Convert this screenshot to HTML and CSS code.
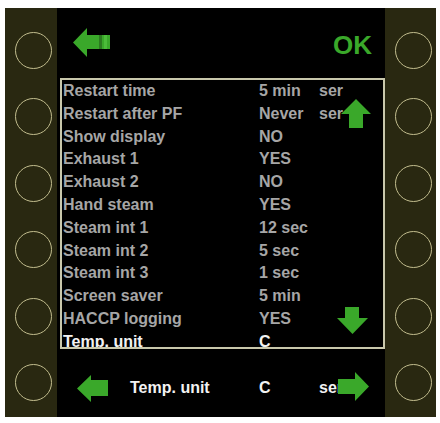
FILE: index.html
```html
<!DOCTYPE html>
<html>
<head>
<meta charset="utf-8">
<link rel="stylesheet" href="styles.css">
</head>
<body>
<div class="device">
  <div class="side side-left">
    <span class="knob"></span><span class="knob"></span><span class="knob"></span>
    <span class="knob"></span><span class="knob"></span><span class="knob"></span>
  </div>
  <div class="screen">
    <div class="header">
      <svg class="icon-exit" width="38" height="29" viewBox="0 0 38 29">
        <polygon points="1,14.5 15,0 15,7 27,7 27,21 15,21 15,29" fill="#3aa82a"/>
        <rect x="27" y="7" width="3" height="14" fill="#2c7a20"/>
        <rect x="30" y="7" width="8" height="14" fill="#3aa82a"/>
        <rect x="32" y="7" width="3" height="14" fill="#4cbc3a"/>
      </svg>
      <span class="ok">OK</span>
    </div>
    <div class="list">
      <div class="row"><span class="lbl">Restart time</span><span class="val">5 min</span><span class="ext">ser</span></div>
      <div class="row"><span class="lbl">Restart after PF</span><span class="val">Never</span><span class="ext">ser</span></div>
      <div class="row"><span class="lbl">Show display</span><span class="val">NO</span></div>
      <div class="row"><span class="lbl">Exhaust 1</span><span class="val">YES</span></div>
      <div class="row"><span class="lbl">Exhaust 2</span><span class="val">NO</span></div>
      <div class="row"><span class="lbl">Hand steam</span><span class="val">YES</span></div>
      <div class="row"><span class="lbl">Steam int 1</span><span class="val">12 sec</span></div>
      <div class="row"><span class="lbl">Steam int 2</span><span class="val">5 sec</span></div>
      <div class="row"><span class="lbl">Steam int 3</span><span class="val">1 sec</span></div>
      <div class="row"><span class="lbl">Screen saver</span><span class="val">5 min</span></div>
      <div class="row"><span class="lbl">HACCP logging</span><span class="val">YES</span></div>
      <div class="row row-active"><span class="lbl">Temp. unit</span><span class="val">C</span></div>
      <svg class="arrow-up" width="30" height="29" viewBox="0 0 30 29">
        <polygon points="15,0 30,15 22,15 22,29 8,29 8,15 0,15" fill="#3aa82a"/>
      </svg>
      <svg class="arrow-down" width="31" height="27" viewBox="0 0 31 27">
        <polygon points="8,0 22,0 22,11 31,11 15.5,27 0,11 8,11" fill="#3aa82a"/>
      </svg>
    </div>
    <div class="footer">
      <svg class="arrow-left" width="31" height="27" viewBox="0 0 31 27">
        <polygon points="0,13.5 14,0 14,5 31,5 31,21 14,21 14,27" fill="#3aa82a"/>
      </svg>
      <span class="f-lbl">Temp. unit</span>
      <span class="f-val">C</span>
      <span class="f-ext">ser</span>
      <svg class="arrow-right" width="31" height="29" viewBox="0 0 31 29">
        <polygon points="0,7 17,7 17,0 31,14.5 17,29 17,22 0,22" fill="#3aa82a"/>
      </svg>
    </div>
  </div>
  <div class="side side-right">
    <span class="knob"></span><span class="knob"></span><span class="knob"></span>
    <span class="knob"></span><span class="knob"></span><span class="knob"></span>
  </div>
</div>
</body>
</html>
```

FILE: styles.css
```css
* { box-sizing: border-box; }
html, body { margin: 0; padding: 0; background: #ffffff; }
body {
  width: 440px;
  height: 423px;
  padding: 8px 4px 6px 5px;
  font-family: "Liberation Sans", Arial, sans-serif;
  overflow: hidden;
}
.device {
  display: grid;
  grid-template-columns: 52px 328px 51px;
  height: 409px;
}
.side {
  background: #292811;
  display: flex;
  flex-direction: column;
  justify-content: space-between;
  padding: 24px 0 16px 10px;
}
.knob {
  display: block;
  width: 37px;
  height: 37px;
  border: 1.5px solid #c2bd8e;
  border-radius: 50%;
}
.screen {
  background: #000;
  display: flex;
  flex-direction: column;
}
.header {
  height: 70px;
  display: flex;
  align-items: center;
  justify-content: space-between;
  padding: 0 13px 0 15px;
}
.icon-exit { display: block; margin-top: -2px; }
.ok {
  color: #3aa82a;
  font-weight: bold;
  font-size: 26px;
  line-height: 1;
  margin-top: 4px;
}
.list {
  position: relative;
  height: 271px;
  margin-left: 3px;
  border: 2px solid #c9c8ac;
  padding-left: 1px;
  overflow: hidden;
}
.row {
  display: flex;
  height: 22.8px;
  line-height: 22.8px;
  font-size: 16px;
  font-weight: bold;
  color: #a6a6a6;
  white-space: nowrap;
}
.row-active { color: #f2f2f2; }
.lbl { width: 196px; }
.val { width: 60px; }
.arrow-up { position: absolute; left: 279px; top: 19px; }
.arrow-down { position: absolute; left: 275px; top: 227px; }
.footer {
  position: relative;
  flex: 1;
  display: flex;
  align-items: center;
  padding: 10px 0 0 20px;
  color: #f2f2f2;
  font-size: 16px;
  font-weight: bold;
}
.arrow-left { display: block; margin-right: 22px; }
.f-lbl { width: 129px; }
.f-val { width: 60px; }
.arrow-right { position: absolute; left: 281px; top: 23px; }
```
